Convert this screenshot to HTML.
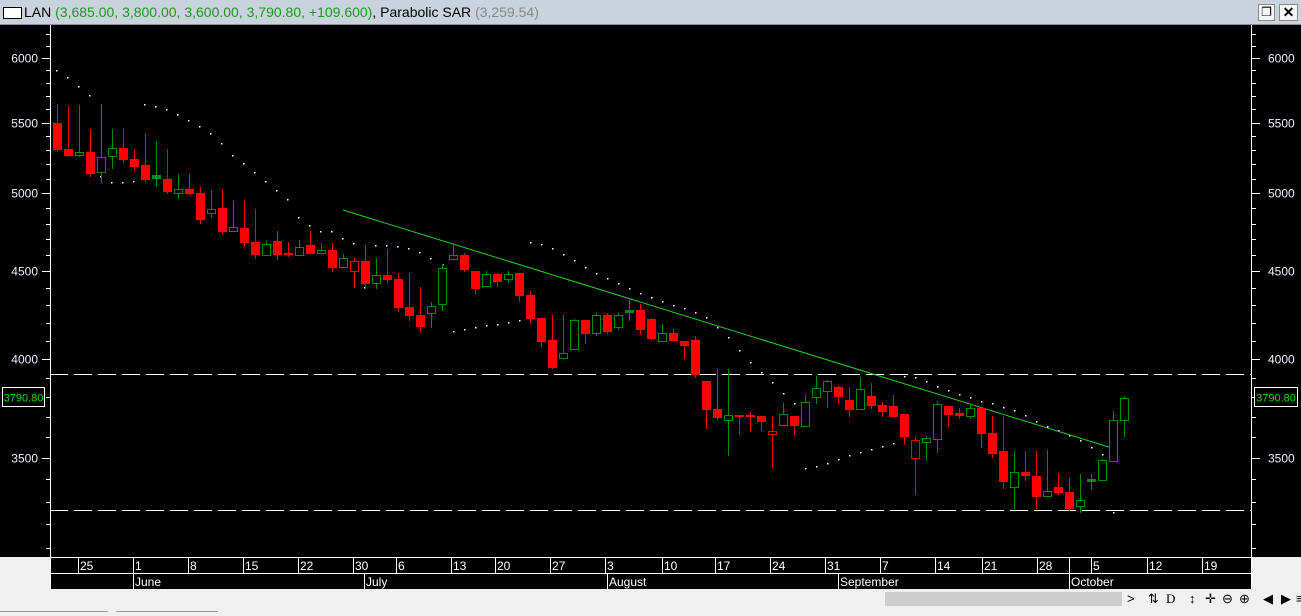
<!DOCTYPE html>
<html><head><meta charset="utf-8">
<style>
html,body{margin:0;padding:0;width:1301px;height:615px;overflow:hidden;background:#f0f0f0;font-family:"Liberation Sans",sans-serif;}
#title{position:absolute;left:0;top:0;width:1301px;height:24px;background:#c9d3dd;border-bottom:1px solid #8a9099;}
#title .t{position:absolute;left:24px;top:4px;font-size:14px;color:#000;white-space:nowrap;}
#title .g{color:#1a9a1a}
#title .gr{color:#888}
#chart{position:absolute;left:0;top:25px;}
#bot{position:absolute;left:0;top:589px;width:1301px;height:26px;background:#f0f0f0;}
.ic{position:absolute;top:591px;font-size:13px;color:#000;}
</style></head><body>
<div id="title">
<div style="position:absolute;left:3px;top:7px;width:17px;height:10px;border:1px solid #000;background:#fff"></div>
<div class="t">LAN <span class="g">(3,685.00, 3,800.00, 3,600.00, 3,790.80, +109.600)</span>, Parabolic SAR <span class="gr">(3,259.54)</span></div>
<div style="position:absolute;left:1258px;top:4px;width:15px;height:15px;border:1px solid #888;background:#f4f4f4;font-size:12px;line-height:15px;text-align:center">&#x2750;</div>
<div style="position:absolute;left:1279px;top:4px;width:17px;height:15px;border:1px solid #888;background:#f4f4f4;font-size:14px;line-height:15px;text-align:center;font-weight:bold">✕</div>
</div>
<svg id="chart" width="1301" height="564" viewBox="0 25 1301 564" xmlns="http://www.w3.org/2000/svg" font-family="Liberation Sans, sans-serif">
<rect x="0" y="25" width="1301" height="564" fill="#000"/>
<rect x="0" y="557" width="50" height="32" fill="#f0f0f0"/>
<rect x="1251" y="557" width="50" height="32" fill="#f0f0f0"/>
<g id="ax"></g>
<line x1="50.5" y1="25" x2="50.5" y2="589" stroke="#fff"/>
<line x1="1251.5" y1="25" x2="1251.5" y2="557" stroke="#fff"/>
<line x1="50" y1="374.5" x2="1251" y2="374.5" stroke="#fff" stroke-width="1" stroke-dasharray="18,6"/>
<line x1="50" y1="510.5" x2="1251" y2="510.5" stroke="#fff" stroke-width="1" stroke-dasharray="18,6"/>
<g id="sar" fill="#fff"></g>
<line x1="343" y1="210" x2="1112" y2="448" stroke="#22cc22" stroke-width="1"/>
<g id="cd"></g>
<rect x="2.5" y="387.5" width="42" height="19" fill="#000" stroke="#fff"/>
<text x="23.5" y="401.5" fill="#00e000" font-size="11" text-anchor="middle">3790.80</text>
<rect x="1254.5" y="387.5" width="43" height="19" fill="#000" stroke="#fff"/>
<text x="1276" y="401.5" fill="#00e000" font-size="11" text-anchor="middle">3790.80</text>
<line x1="50" y1="557.5" x2="1251" y2="557.5" stroke="#fff"/>
<line x1="50" y1="573.5" x2="1251" y2="573.5" stroke="#fff"/>
<g id="dt" fill="#fff" font-size="12"></g>
</svg>
<div id="bot">
<div style="position:absolute;left:885px;top:3px;width:237px;height:14px;background:#cdcdcd"></div>
<div style="position:absolute;left:0;top:22px;width:108px;height:4px;border-top:1px solid #999"></div>
<div style="position:absolute;left:116px;top:22px;width:102px;height:4px;border-top:1px solid #999"></div>
</div>
<div class="ic" style="left:1127px">&gt;</div>
<div class="ic" style="left:1148px">&#x21C5;</div>
<div class="ic" style="left:1166px;font-family:'Liberation Serif',serif">D</div>
<div class="ic" style="left:1189px">&#x2195;</div>
<div class="ic" style="left:1205px">&#x271B;</div>
<div class="ic" style="left:1222px">&#x2296;</div>
<div class="ic" style="left:1239px">&#x2295;</div>
<div class="ic" style="left:1263px">&#x25C0;</div>
<div class="ic" style="left:1281px">&#x25B6;</div>
<div class="ic" style="left:1296px">&#x2261;</div>
<script>
var NS="http://www.w3.org/2000/svg";
function el(p,t,a,txt){var e=document.createElementNS(NS,t);for(var k in a)e.setAttribute(k,a[k]);if(txt)e.textContent=txt;p.appendChild(e);return e;}
var ax=document.getElementById('ax');
function py(p){return 58+742*Math.log(6000/p);}
for(var p=3100;p<=6200;p+=100){var y=Math.round(py(p))+0.5;var maj=p%500==0;
el(ax,'line',{x1:maj?42:46,y1:y,x2:50,y2:y,stroke:'#fff'});
el(ax,'line',{x1:1251,y1:y,x2:maj?1260:1256,y2:y,stroke:'#fff'});
if(maj){el(ax,'text',{x:38,y:y+4,fill:'#eef',"font-size":12,"text-anchor":"end"},String(p));
el(ax,'text',{x:1268,y:y+4,fill:'#eef',"font-size":12},String(p));}}
var D=[
[104,123,149,151,'r'],[106,149,155,156,'r'],[105,152,155,156,'g'],[129,152,173,176,'r'],[104,157,172,182,'g'],
[129,148,156,168,'g'],[128,148,159,162,'r'],[149,159,166,169,'r'],[134,165,179,181,'r'],[141,175,178,186,'G'],
[149,179,191,193,'r'],[174,189,193,198,'g'],[174,189,193,194,'r'],[187,193,219,223,'r'],[190,209,213,217,'g'],
[189,208,231,234,'r'],[201,227,231,231,'g'],[200,228,242,246,'r'],[209,242,254,258,'r'],[241,244,255,255,'g'],
[231,241,254,259,'r'],[242,253,254,256,'r'],[240,247,255,255,'g'],[231,245,253,253,'r'],[243,250,253,253,'g'],
[243,250,267,271,'r'],[254,258,267,267,'g'],[258,261,271,287,'R'],[245,261,283,287,'r'],[258,275,283,288,'g'],
[249,275,279,282,'r'],[273,279,307,311,'r'],[273,307,315,320,'r'],[287,315,326,331,'r'],[302,306,313,327,'g'],
[264,268,304,310,'g'],[243,255,259,259,'g'],[253,255,269,271,'r'],[271,271,288,293,'r'],[271,274,286,286,'g'],
[273,274,281,286,'r'],[271,274,279,282,'g'],[273,273,295,301,'r'],[291,295,318,322,'r'],[318,318,341,346,'r'],
[315,340,367,368,'r'],[315,353,358,358,'g'],[319,320,349,349,'g'],[320,320,333,343,'r'],[313,315,333,335,'g'],
[313,315,331,333,'r'],[313,315,327,329,'g'],[298,310,312,320,'G'],[304,310,329,334,'r'],[318,319,338,339,'r'],
[324,333,341,341,'g'],[329,333,340,340,'r'],[341,341,345,358,'r'],[336,340,374,377,'r'],[381,381,409,428,'r'],
[369,409,417,419,'r'],[369,415,420,455,'g'],[415,415,416,433,'r'],[412,415,416,431,'r'],[416,416,421,430,'r'],
[416,431,434,467,'R'],[403,414,425,425,'g'],[416,416,425,434,'r'],[395,402,426,426,'g'],[376,388,397,403,'g'],
[380,381,391,407,'g'],[386,387,396,403,'r'],[387,400,409,416,'r'],[377,389,409,409,'g'],[383,396,405,408,'r'],
[402,405,411,416,'r'],[395,406,416,416,'r'],[414,414,436,444,'r'],[437,440,458,494,'R'],[436,438,442,460,'g'],
[402,404,439,452,'g'],[406,406,414,425,'r'],[408,413,415,418,'r'],[405,408,416,418,'g'],[407,408,433,447,'r'],
[416,433,453,457,'r'],[416,451,481,488,'r'],[451,472,487,508,'g'],[451,472,475,480,'r'],[451,476,496,508,'r'],
[450,491,496,496,'g'],[473,487,492,494,'r'],[478,492,508,510,'r'],[474,500,506,512,'g'],[474,479,481,489,'G'],
[459,460,480,480,'g'],[411,420,461,461,'g'],[396,398,420,436,'g']];
var cd=document.getElementById('cd');
D.forEach(function(c,i){var x=Math.round(56.5+11*i);var t=c[4];var col=(t=='r'||t=='R')?'#ff0000':'#008c00';
el(cd,'line',{x1:x+0.5,y1:c[0],x2:x+0.5,y2:c[3]+1,stroke:col});
var h=Math.max(1,c[2]-c[1]);
if(t=='r'||t=='G'){el(cd,'rect',{x:x-4,y:c[1],width:9,height:h+1,fill:col});}
else{el(cd,'rect',{x:x-3.5,y:c[1]+0.5,width:8,height:h,fill:'#000',stroke:col});}});
var S=[[56,70],[67,77],[78,86],[89,95],[144,104],[155,106],[166,109],[177,114],[188,120],[199,126],[210,133],[221,143],[232,155],[243,163],[254,172],[265,181],[276,190],[287,199],
[100,176],[111,182],[122,182],[133,181],
[298,217],[309,225],[320,231],[331,231],[342,238],[353,243],[364,287],[375,245],[386,245],[397,246],[408,248],[419,252],[430,258],[442,264],
[453,331],[464,329],[475,327],[486,325],[497,324],[508,322],[519,320],[530,242],[541,244],[552,248],[563,254],[574,260],[585,267],[596,273],[607,278],
[618,283],[629,288],[640,293],[651,297],[662,301],[673,305],[684,308],[695,312],[706,317],[717,327],[728,337],[739,350],[750,362],[761,372],[772,382],[783,393],[794,403],
[805,468],[816,466],[827,463],[838,459],[849,455],[860,452],[871,449],[882,446],[893,443],
[904,376],[915,377],[926,381],[937,386],[948,390],[959,394],[970,397],[981,401],[992,403],[1003,407],[1014,410],[1025,415],[1036,421],[1047,426],[1058,430],[1069,435],[1080,440],[1091,447],[1102,454],[1113,512]];
var sg=document.getElementById('sar');
S.forEach(function(s){el(sg,'rect',{x:s[0],y:s[1],width:1.5,height:1.5});});
var dt=document.getElementById('dt');
var R1=[[78,'25'],[133,'1'],[188,'8'],[243,'15'],[298,'22'],[353,'30'],[396,'6'],[451,'13'],[495,'20'],[550,'27'],[605,'3'],[662,'10'],[715,'17'],[770,'24'],[825,'31'],[880,'7'],[935,'14'],[982,'21'],[1037,'28'],[1091,'5'],[1147,'12'],[1202,'19']];
R1.forEach(function(r){el(dt,'line',{x1:r[0]+0.5,y1:557,x2:r[0]+0.5,y2:573,stroke:'#fff'});el(dt,'text',{x:r[0]+2,y:570},r[1]);});
el(dt,'line',{x1:1069.5,y1:557,x2:1069.5,y2:573,stroke:'#fff'});
var R2=[[133,'June'],[364,'July'],[607,'August'],[838,'September'],[1069,'October']];
R2.forEach(function(r){el(dt,'line',{x1:r[0]+0.5,y1:573,x2:r[0]+0.5,y2:589,stroke:'#fff'});el(dt,'text',{x:r[0]+2,y:586},r[1]);});
el(dt,'line',{x1:1251.5,y1:557,x2:1251.5,y2:589,stroke:'#fff'});
</script>
</body></html>
